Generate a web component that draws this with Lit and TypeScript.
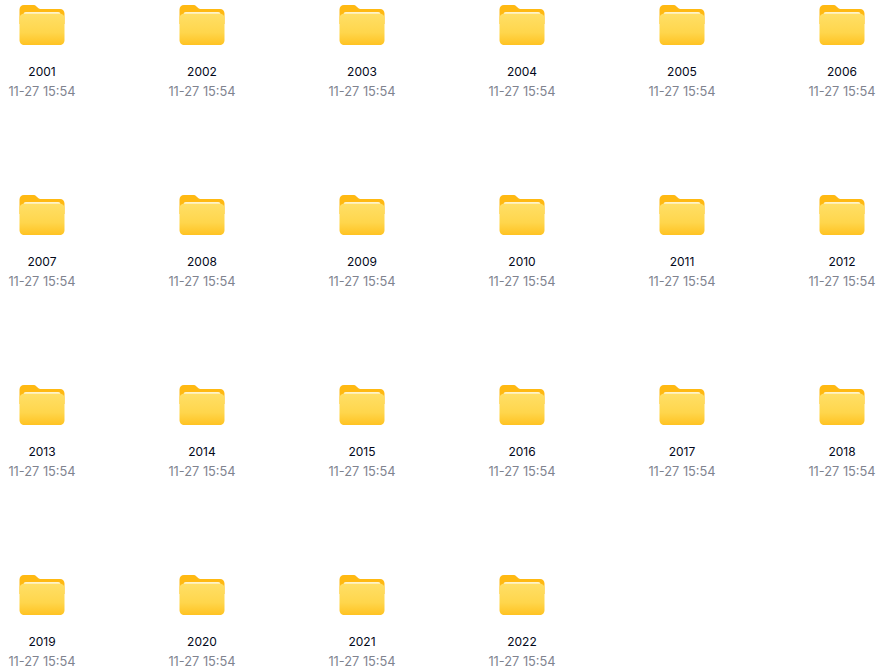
import { LitElement, html, css, svg } from "lit";
import { customElement } from "lit/decorators.js";

const names = Array.from({ length: 22 }, (_, i) => String(2001 + i));

const folder = svg`<svg class="icon" width="46" height="42" viewBox="0 0 46 42">
  <defs>
    <linearGradient id="f" x1="0" y1="0" x2="0" y2="1">
      <stop offset="0" stop-color="#ffdf66"/>
      <stop offset="0.6" stop-color="#ffd64c"/>
      <stop offset="1" stop-color="#ffc322"/>
    </linearGradient>
  </defs>
  <path d="M0.5 5.5C0.5 2.8 2.3 1 5 1H14C15.5 1 16.5 1.5 17.5 2.4L19.2 4C20 4.7 20.9 5 22.2 5H41C43.7 5 45.5 6.8 45.5 9.5V20H0.5Z" fill="#ffb912"/>
  <path d="M4.5 10.5C4.5 8.8 5.5 8 6.8 8H39.2C40.5 8 41.5 8.8 41.5 10.5V13H4.5Z" fill="#fff3c9"/>
  <path d="M0.5 14C0.5 11.6 2.3 9.8 5 9.8H41C43.7 9.8 45.5 11.6 45.5 14V36C45.5 39 43.5 41 40.5 41H5.5C2.5 41 0.5 39 0.5 36Z" fill="url(#f)"/>
</svg>`;

@customElement("app-root")
export class AppRoot extends LitElement {
  static styles = css`
    :host {
      display: block;
      width: 894px;
      height: 670px;
      overflow: hidden;
      background: #fff;
      font-family: Inter, "Noto Sans", sans-serif;
    }
    .grid {
      display: grid;
      grid-template-columns: repeat(6, 84px);
      column-gap: 76px;
      grid-auto-rows: 190px;
      padding-top: 4px;
    }
    .cell {
      display: flex;
      flex-direction: column;
      align-items: center;
    }
    .icon {
      display: block;
      flex: none;
    }
    .name {
      margin-top: 18px;
      font-size: 12px;
      line-height: 16px;
      color: #03081a;
      white-space: nowrap;
    }
    .time {
      margin-top: 4px;
      font-size: 12.8px;
      line-height: 16px;
      color: #80838f;
      white-space: nowrap;
    }
  `;

  render() {
    return html`<div class="grid">
      ${names.map(
        (n) => html`<div class="cell">
          ${folder}
          <div class="name">${n}</div>
          <div class="time">11-27 15:54</div>
        </div>`
      )}
    </div>`;
  }
}
